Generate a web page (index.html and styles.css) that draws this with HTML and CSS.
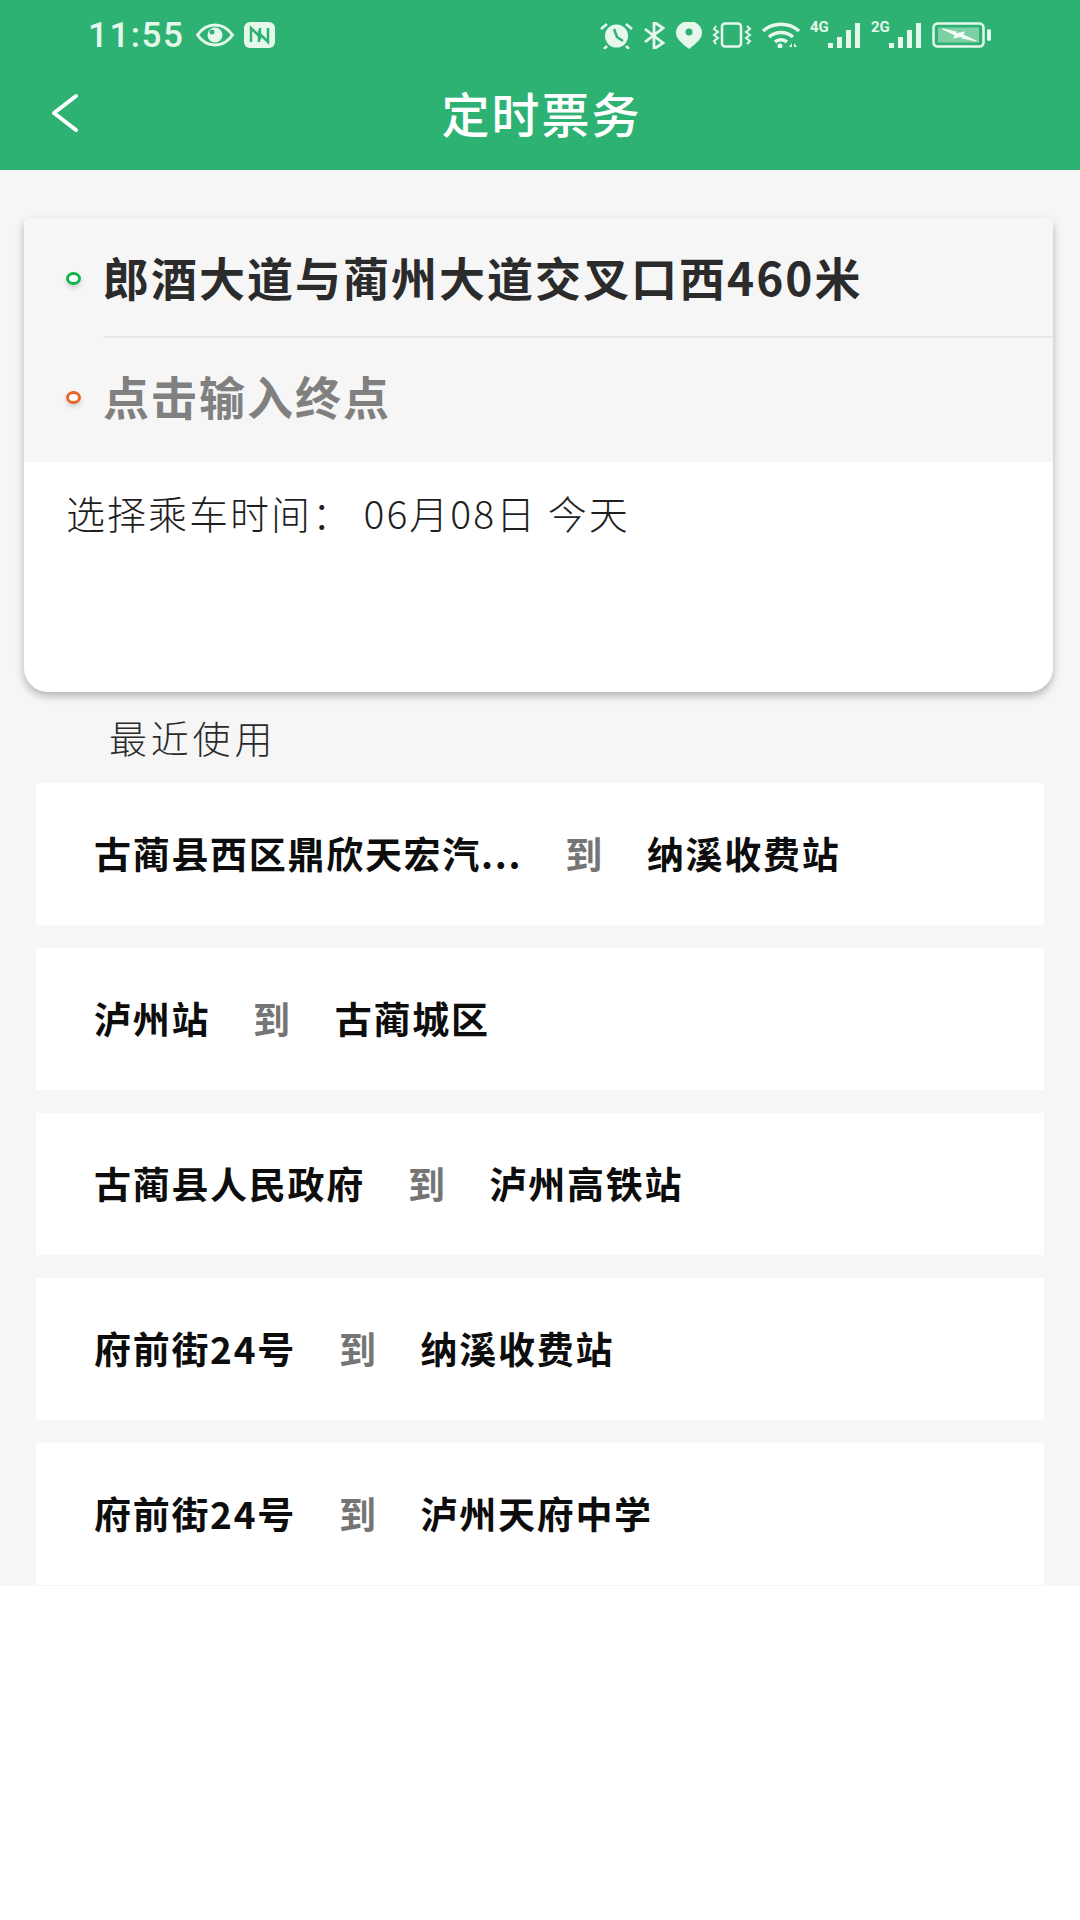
FILE: index.html
```html
<!DOCTYPE html>
<html lang="zh-CN">
<head>
    <meta charset="UTF-8">
    <meta name="viewport" content="width=device-width, initial-scale=1.0">
    <title>定时票务</title>
    <link rel="stylesheet" href="styles.css">
</head>
<body>
    <div class="page">
        <header class="topbar">
            <div class="statusbar">
                <div class="status-left">
                    <span class="clock">11:55</span>
                    <svg width="38" height="24" viewBox="0 0 38 24"><path d="M1.500 12C7 4 13 2 19 2s12 2 17.500 10C31 20 25 22 19 22S7 20 1.500 12z" fill="none" stroke="#e6f7ec" stroke-width="3"/><circle cx="19" cy="12" r="7.500" fill="#e6f7ec"/><circle cx="16" cy="9" r="2.500" fill="#2eb274"/></svg>
                    <svg width="31" height="26" viewBox="0 0 31 26"><rect width="31" height="26" rx="6" fill="#e6f7ec"/><path d="M7 20V6l9 9V6M24 6v14l-9-9v9" fill="none" stroke="#2eb274" stroke-width="2.500"/></svg>
                </div>
                <div class="status-right">
                    <svg width="33" height="27" viewBox="0 0 33 27"><circle cx="16.500" cy="14" r="11.500" fill="#e6f7ec"/><path d="M1 7l6-5M32 7l-6-5M7 24l-3 3M26 24l3 3" stroke="#e6f7ec" stroke-width="2.500"/><path d="M14 7l3 8 6 4" fill="none" stroke="#2eb274" stroke-width="2.500"/></svg>
                    <svg width="23" height="27" viewBox="0 0 23 27"><path d="M2 7l18 14-9 6V0l9 6L2 20" fill="none" stroke="#e6f7ec" stroke-width="2.800"/></svg>
                    <svg width="26" height="27" viewBox="0 0 26 27"><path d="M13 27C5 21 0 16 0 11a13 12 0 0 1 26 0c0 5-5 10-13 16z" fill="#e6f7ec"/><circle cx="13" cy="10" r="3.500" fill="#2eb274"/></svg>
                    <svg width="40" height="26" viewBox="0 0 40 26"><rect x="10" y="1.500" width="19" height="23" rx="3" fill="none" stroke="#e6f7ec" stroke-width="2.500"/><path d="M4 4l-2 3 4 3-4 3 4 3-4 3 2 3M35 4l3 3-4 3 4 3-4 3 4 3-3 3" fill="none" stroke="#e6f7ec" stroke-width="2"/></svg>
                    <svg width="38" height="26" viewBox="0 0 38 26"><path d="M1 9c10-9 26-9 36 0M7 15c7-6 17-6 24 0M13 20c3-3 9-3 12 0" fill="none" stroke="#e6f7ec" stroke-width="3.500"/><circle cx="18" cy="24" r="2.500" fill="#e6f7ec"/><path d="M27 25l3-4v4zM32 21l3 4h-3z" fill="#e6f7ec"/></svg>
                    <span class="signal"><span class="net">4G</span><span class="bars"><i class="bar-1"></i><i class="bar-2"></i><i class="bar-3"></i><i class="bar-4"></i></span></span>
                    <span class="signal"><span class="net">2G</span><span class="bars"><i class="bar-1"></i><i class="bar-2"></i><i class="bar-3"></i><i class="bar-4"></i></span></span>
                    <svg width="60" height="26" viewBox="0 0 60 26"><rect x="1.500" y="1.500" width="50" height="23" rx="4" fill="none" stroke="#e6f7ec" stroke-width="2.500"/><rect x="6" y="5.500" width="41" height="15" fill="#7fcfa4"/><path d="M11 7l13 3-1 2 9-2-1 3 13 6-14-3 1-2-9 2 1-3z" fill="#f2fbf5" stroke="#f2fbf5" stroke-width="1.200" stroke-linejoin="round"/><rect x="55" y="7" width="4" height="12" rx="2" fill="#e6f7ec"/></svg>
                </div>
            </div>
            <div class="titlebar">
                <svg class="back" width="28" height="40" viewBox="0 0 28 40"><path d="M25 3L3 20l22 17" fill="none" stroke="#fff" stroke-width="4" stroke-linecap="round" stroke-linejoin="round"/></svg>
                <h1>定时票务</h1>
            </div>
        </header>

        <main>
            <section class="trip-card">
                <div class="stops">
                    <div class="stop stop-from">
                        <span class="dot dot-green"></span>
                        <span class="stop-name">郎酒大道与蔺州大道交叉口西460米</span>
                    </div>
                    <div class="stop stop-to">
                        <span class="dot dot-orange"></span>
                        <span class="stop-name">点击输入终点</span>
                    </div>
                </div>
                <div class="ride-time">选择乘车时间： 06月08日 今天</div>
            </section>

            <div class="recent-title">最近使用</div>

            <ul class="recent-list">
                <li><b>古蔺县西区鼎欣天宏汽...</b><span>到</span><b>纳溪收费站</b></li>
                <li><b>泸州站</b><span>到</span><b>古蔺城区</b></li>
                <li><b>古蔺县人民政府</b><span>到</span><b>泸州高铁站</b></li>
                <li><b>府前街24号</b><span>到</span><b>纳溪收费站</b></li>
                <li><b>府前街24号</b><span>到</span><b>泸州天府中学</b></li>
            </ul>
        </main>
    </div>
</body>
</html>
```
FILE: styles.css
```css
* {
    box-sizing: border-box;
}

body {
    margin: 0;
    background: #fff;
    font-family: "Noto Sans CJK SC", "Noto Sans", sans-serif;
}

.page {
    height: 1586px;
    overflow: hidden;
    background: #f6f6f7;
}

.topbar {
    height: 170px;
    background: #2eb274;
    color: #fff;
}

.statusbar {
    height: 70px;
    padding: 20px 88px 0;
    display: flex;
    justify-content: space-between;
}

.status-left,
.status-right {
    display: flex;
    align-items: center;
    height: 30px;
}

.status-left {
    gap: 10px;
}

.status-right {
    gap: 10px;
}

.clock {
    font-family: Roboto, sans-serif;
    font-size: 35px;
    font-weight: 500;
    letter-spacing: 1.5px;
    color: #e6f7ec;
    width: 98px;
}

.signal {
    display: flex;
    align-items: flex-end;
    height: 26px;
    width: 51px;
    position: relative;
}

.net {
    position: absolute;
    left: 0;
    top: -4px;
    font-family: Roboto, sans-serif;
    font-size: 15px;
    font-weight: 700;
    color: #e6f7ec;
}

.bars {
    margin-left: 18px;
    display: flex;
    align-items: flex-end;
    gap: 4px;
}

.bars i {
    display: block;
    width: 5px;
    background: #e6f7ec;
}

.bar-1 { height: 5px; }
.bar-2 { height: 11px; }
.bar-3 { height: 18px; }
.bar-4 { height: 25px; }

.titlebar {
    height: 100px;
    padding-bottom: 17px;
    display: flex;
    align-items: center;
    justify-content: center;
    position: relative;
}

.back {
    position: absolute;
    left: 51px;
    top: 23px;
}

.titlebar h1 {
    margin: 0 0 0 3px;
    font-size: 48px;
    font-weight: 500;
    letter-spacing: 2px;
}

main {
    padding: 48px 27px 0 24px;
}

.trip-card {
    height: 474px;
    border-radius: 6px 6px 24px 24px;
    background: #fff;
    box-shadow: 0 4px 8px rgba(0, 0, 0, 0.28);
    overflow: hidden;
}

.stops {
    height: 244px;
    background: #f6f6f6;
}

.stop {
    display: flex;
    align-items: center;
    padding-left: 42px;
    font-size: 46px;
    font-weight: 700;
}

.stop-from {
    position: relative;
    height: 120px;
    padding-bottom: 4px;
    color: #2b2b2b;
}

.stop-to {
    height: 120px;
    padding-bottom: 6px;
    color: #808080;
}

.stop-name {
    margin-left: 22px;
    letter-spacing: 2px;
    white-space: nowrap;
}

.stop-from::after {
    content: "";
    position: absolute;
    left: 79px;
    right: 0;
    bottom: 0;
    height: 2px;
    background: #e8e8e8;
}

.dot {
    flex: none;
    width: 15px;
    height: 13px;
    margin-top: 5px;
    border-radius: 50%;
    background: #fff;
    border: 3px solid;
    box-shadow: 0 3px 5px rgba(0, 0, 0, 0.15);
}

.dot-green {
    border-color: #12b34a;
}

.dot-orange {
    border-color: #e8662c;
}

.ride-time {
    padding: 25px 0 0 42px;
    font-size: 39px;
    font-weight: 300;
    line-height: 50px;
    letter-spacing: 2px;
    color: #1f1f1f;
}

.recent-title {
    margin: 18px 0 0 85px;
    font-size: 38px;
    line-height: 54px;
    letter-spacing: 3.8px;
    font-weight: 300;
    color: #2b2b2b;
}

.recent-list {
    list-style: none;
    margin: 19px 9px 0 12px;
    padding: 0;
    display: flex;
    flex-direction: column;
    gap: 23px;
}

.recent-list li {
    flex: none;
    height: 142px;
    padding: 0 0 2px 58px;
    display: flex;
    align-items: center;
    gap: 43px;
    background: #fff;
    font-size: 37px;
    letter-spacing: 1.7px;
    white-space: nowrap;
}

.recent-list b {
    font-weight: 700;
    color: #0d0d0d;
}

.recent-list span {
    font-weight: 700;
    color: #757575;
}
```
